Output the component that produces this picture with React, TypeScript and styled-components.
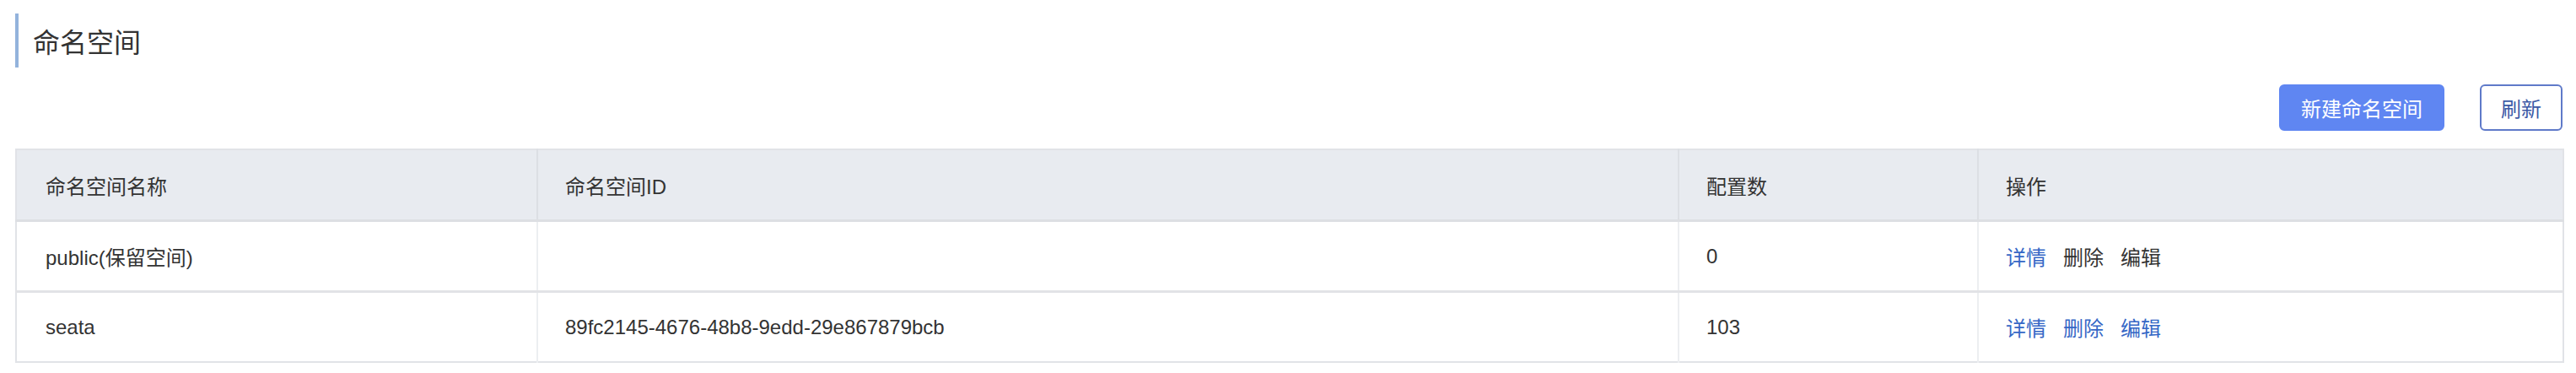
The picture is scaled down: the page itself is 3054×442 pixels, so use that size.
import styled, { createGlobalStyle } from "styled-components";

const GlobalStyle = createGlobalStyle`
  html, body {
    margin: 0;
    padding: 0;
    background: #fff;
  }
  body {
    font-family: "Liberation Sans", "Noto Sans CJK SC", sans-serif;
    color: #333;
  }
`

const Page = styled.div`
  padding: 16px 16px 0 18px;
`

const PageTitle = styled.h1`
  margin: 0;
  height: 64px;
  display: flex;
  align-items: center;
  border-left: 4px solid #93b3dc;
  padding-left: 17px;
  font-size: 32px;
  font-weight: normal;
  color: #333;
`

const Toolbar = styled.div`
  display: flex;
  justify-content: flex-end;
  gap: 42px;
  margin-top: 20px;
`

const Button = styled.button<{ primary?: boolean }>`
  height: 55px;
  padding: 0 ${p => (p.primary ? "24px" : "23px")};
  font-family: inherit;
  font-size: 24px;
  border-radius: 6px;
  cursor: pointer;
  border: 2px solid ${p => (p.primary ? "#5f86f2" : "#5f7ac9")};
  background: ${p => (p.primary ? "#5f86f2" : "#fff")};
  color: ${p => (p.primary ? "#fff" : "#3c5aa6")};
`

const Table = styled.table`
  margin-top: 21px;
  width: 3020px;
  border-collapse: collapse;
  table-layout: fixed;
  border: 2px solid #e1e3e7;
`

const HeadCell = styled.th`
  height: 82px;
  padding: 0 0 0 32px;
  background: #e8ebf0;
  border-left: 2px solid #dcdfe4;
  border-bottom: 3px solid #dddfe3;
  text-align: left;
  font-size: 24px;
  font-weight: normal;
  color: #333;
  &:first-child {
    padding-left: 34px;
    border-left: none;
  }
`

const Row = styled.tr`
  border-bottom: 3px solid #e2e3e6;
  &:last-child {
    border-bottom: 2px solid #e1e3e7;
  }
`

const Cell = styled.td`
  height: 81px;
  padding: 0 0 0 32px;
  border-left: 2px solid #eceef1;
  font-size: 24px;
  color: #333;
  &:first-child {
    padding-left: 34px;
    border-left: none;
  }
`

const Actions = styled.div`
  display: flex;
  gap: 20px;
`

const Action = styled.a<{ active: boolean }>`
  color: ${p => (p.active ? "#3567c6" : "#333")};
  text-decoration: none;
  cursor: ${p => (p.active ? "pointer" : "default")};
`

interface Inamespace {
  name: string
  id: string
  count: number
  reserved: boolean
}

const data: Inamespace[] = [
  { name: "public(保留空间)", id: "", count: 0, reserved: true },
  { name: "seata", id: "89fc2145-4676-48b8-9edd-29e867879bcb", count: 103, reserved: false },
]

function App() {
  return (
    <>
      <GlobalStyle />
      <Page>
        <PageTitle>命名空间</PageTitle>
        <Toolbar>
          <Button primary>新建命名空间</Button>
          <Button>刷新</Button>
        </Toolbar>
        <Table>
          <colgroup>
            <col style={{ width: 618 }} />
            <col style={{ width: 1353 }} />
            <col style={{ width: 355 }} />
            <col style={{ width: 694 }} />
          </colgroup>
          <thead>
            <tr>
              <HeadCell>命名空间名称</HeadCell>
              <HeadCell>命名空间ID</HeadCell>
              <HeadCell>配置数</HeadCell>
              <HeadCell>操作</HeadCell>
            </tr>
          </thead>
          <tbody>
            {data.map(ns => (
              <Row key={ns.name}>
                <Cell>{ns.name}</Cell>
                <Cell>{ns.id}</Cell>
                <Cell>{ns.count}</Cell>
                <Cell>
                  <Actions>
                    <Action active>详情</Action>
                    <Action active={!ns.reserved}>删除</Action>
                    <Action active={!ns.reserved}>编辑</Action>
                  </Actions>
                </Cell>
              </Row>
            ))}
          </tbody>
        </Table>
      </Page>
    </>
  )
}

export default App;
